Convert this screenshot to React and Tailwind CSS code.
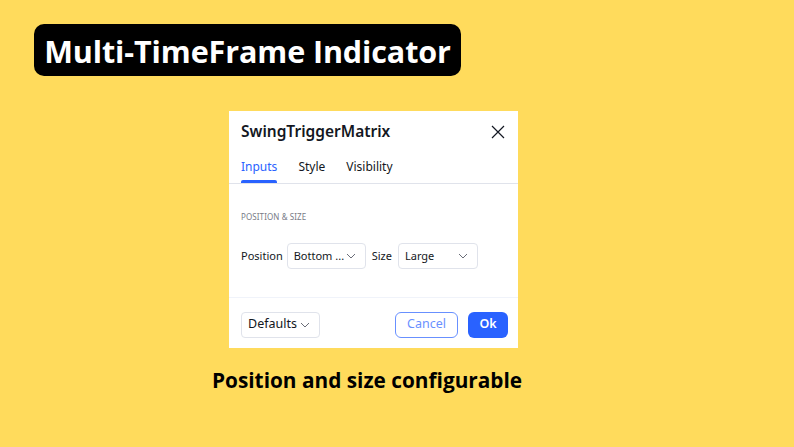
import React from 'react';

function Chevron() {
  return (
    <svg width="10" height="6" viewBox="0 0 10 6" fill="none" className="text-[#6a6d78]">
      <path d="M1 1l4 4 4-4" stroke="currentColor" strokeWidth="1" />
    </svg>
  );
}

function Select({ label, width }) {
  return (
    <div className={`flex items-center justify-between h-[26px] ${width} pl-[6px] pr-[9px] border border-[#e0e3eb] rounded-[4px] bg-white`}>
      <span>{label}</span>
      <Chevron />
    </div>
  );
}

export default function App() {
  return (
    <div className="w-[794px] h-[447px] bg-[#ffdb5c] flex flex-col relative overflow-hidden" style={{ fontFamily: '"Open Sans", sans-serif' }}>
      <div className="ml-[34px] mt-[24px] h-[52px] w-[427px] bg-black rounded-[10px] flex items-center justify-center pt-[3px]">
        <span className="text-white font-bold text-[30.5px] leading-none tracking-[-0.1px]">Multi-TimeFrame Indicator</span>
      </div>

      <div
        className="ml-[229px] mt-[35px] w-[289px] h-[237px] bg-white flex flex-col text-[#131722]"
        style={{ fontFamily: '"Noto Sans", sans-serif' }}
      >
        <div className="flex items-center justify-between pl-[12px] pr-[13px] h-[40px] pt-[1px]">
          <span className="text-[15.5px] font-semibold">SwingTriggerMatrix</span>
          <svg width="14" height="14" viewBox="0 0 14 14" fill="none">
            <path d="M1 1l12 12M13 1L1 13" stroke="#131722" strokeWidth="1.2" />
          </svg>
        </div>
        <div className="flex gap-[21px] px-[12px] h-[33px] border-b border-[#e0e3eb] text-[12px] items-stretch">
          <div className="flex flex-col justify-between pt-[7px]">
            <span className="text-[#2962ff]">Inputs</span>
            <div className="h-[3px] bg-[#2962ff] rounded-t-[2px]" />
          </div>
          <span className="pt-[7px]">Style</span>
          <span className="pt-[7px]">Visibility</span>
        </div>
        <div className="flex-1 px-[12px] pt-[27px] border-b border-[#f0f3fa]">
          <div className="text-[8px] text-[#787b86] tracking-[0.1px]">POSITION &amp; SIZE</div>
          <div className="flex items-center mt-[20px] text-[11px]">
            <span className="mr-[4px]">Position</span>
            <Select label="Bottom ..." width="w-[79px]" />
            <span className="ml-[6px] mr-[6px]">Size</span>
            <Select label="Large" width="w-[80px]" />
          </div>
        </div>
        <div className="h-[50px] flex items-center pl-[12px] pr-[10px] pt-[3px] text-[12.5px]">
          <Select label="Defaults" width="w-[79px]" />
          <div className="flex-1" />
          <div className="h-[26px] w-[63px] rounded-[6px] border border-[#2962ff] opacity-70 text-[#2962ff] flex items-center justify-center">Cancel</div>
          <div className="ml-[10px] h-[26px] w-[40px] rounded-[6px] bg-[#2962ff] text-white font-semibold flex items-center justify-center">Ok</div>
        </div>
      </div>

      <div className="mt-[22px] ml-[212px] text-[20.8px] font-bold text-black leading-none">Position and size configurable</div>
    </div>
  );
}
